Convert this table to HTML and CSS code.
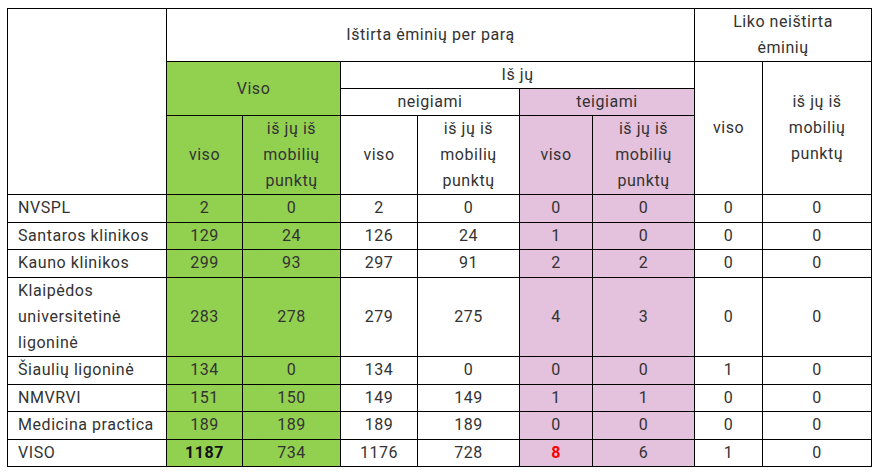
FILE: index.html
```html
<!DOCTYPE html>
<html lang="lt">
<head>
<meta charset="utf-8">
<title>Ėminiai</title>
<link rel="stylesheet" href="styles.css">
</head>
<body>
<div class="wrap">
<table class="stats">
  <colgroup>
    <col class="c1"><col class="c2"><col class="c3"><col class="c4"><col class="c5"><col class="c6"><col class="c7"><col class="c8"><col class="c9">
  </colgroup>
  <thead>
    <tr class="h2">
      <th rowspan="4"></th>
      <th colspan="6">Ištirta ėminių per parą</th>
      <th colspan="2" class="liko">Liko neištirta ėminių</th>
    </tr>
    <tr class="h1">
      <th colspan="2" rowspan="2" class="green">Viso</th>
      <th colspan="4">Iš jų</th>
      <th rowspan="3">viso</th>
      <th rowspan="3">iš jų iš mobilių punktų</th>
    </tr>
    <tr class="h1">
      <th colspan="2">neigiami</th>
      <th colspan="2" class="pink">teigiami</th>
    </tr>
    <tr class="h3">
      <th class="green">viso</th>
      <th class="green">iš jų iš mobilių punktų</th>
      <th>viso</th>
      <th>iš jų iš mobilių punktų</th>
      <th class="pink">viso</th>
      <th class="pink">iš jų iš mobilių punktų</th>
    </tr>
  </thead>
  <tbody>
    <tr><td class="name">NVSPL</td><td class="green">2</td><td class="green">0</td><td>2</td><td>0</td><td class="pink">0</td><td class="pink">0</td><td>0</td><td>0</td></tr>
    <tr><td class="name">Santaros klinikos</td><td class="green">129</td><td class="green">24</td><td>126</td><td>24</td><td class="pink">1</td><td class="pink">0</td><td>0</td><td>0</td></tr>
    <tr><td class="name">Kauno klinikos</td><td class="green">299</td><td class="green">93</td><td>297</td><td>91</td><td class="pink">2</td><td class="pink">2</td><td>0</td><td>0</td></tr>
    <tr><td class="name">Klaipėdos universitetinė ligoninė</td><td class="green">283</td><td class="green">278</td><td>279</td><td>275</td><td class="pink">4</td><td class="pink">3</td><td>0</td><td>0</td></tr>
    <tr><td class="name">Šiaulių ligoninė</td><td class="green">134</td><td class="green">0</td><td>134</td><td>0</td><td class="pink">0</td><td class="pink">0</td><td>1</td><td>0</td></tr>
    <tr><td class="name">NMVRVI</td><td class="green">151</td><td class="green">150</td><td>149</td><td>149</td><td class="pink">1</td><td class="pink">1</td><td>0</td><td>0</td></tr>
    <tr><td class="name">Medicina practica</td><td class="green">189</td><td class="green">189</td><td>189</td><td>189</td><td class="pink">0</td><td class="pink">0</td><td>0</td><td>0</td></tr>
    <tr><td class="name">VISO</td><td class="green"><strong>1187</strong></td><td class="green">734</td><td>1176</td><td>728</td><td class="pink"><strong class="red">8</strong></td><td class="pink">6</td><td>1</td><td>0</td></tr>
  </tbody>
</table>
</div>
</body>
</html>
```
FILE: styles.css
```css
html, body {
  margin: 0;
  padding: 0;
  background: #fff;
}
.wrap {
  padding: 8px 0 0 7px;
}
.stats {
  border-collapse: collapse;
  table-layout: fixed;
  width: 864px;
  font-family: Roboto, "Liberation Sans", sans-serif;
  font-size: 16px;
  letter-spacing: 0.55px;
  line-height: 26px;
  color: #333;
}
.c1 { width: 159px; }
.c2 { width: 76px; }
.c3 { width: 98px; }
.c4 { width: 77px; }
.c5 { width: 102px; }
.c6 { width: 73px; }
.c7 { width: 102px; }
.c8 { width: 68px; }
.c9 { width: 109px; }
.stats th,
.stats td {
  border: 1px solid #000;
  padding: 0 8px;
  text-align: center;
  vertical-align: middle;
  font-weight: normal;
}
.stats td {
  padding-top: 0.25px;
  padding-bottom: 0.25px;
}
.stats td.name {
  text-align: left;
  padding-left: 10px;
}
.stats .liko {
  padding: 0 30px;
}
.green { background: #92d050; }
.pink { background: #e4c1dc; }
.stats strong {
  font-weight: bold;
  color: #111;
}
.stats strong.red {
  color: #ff0000;
}
```
